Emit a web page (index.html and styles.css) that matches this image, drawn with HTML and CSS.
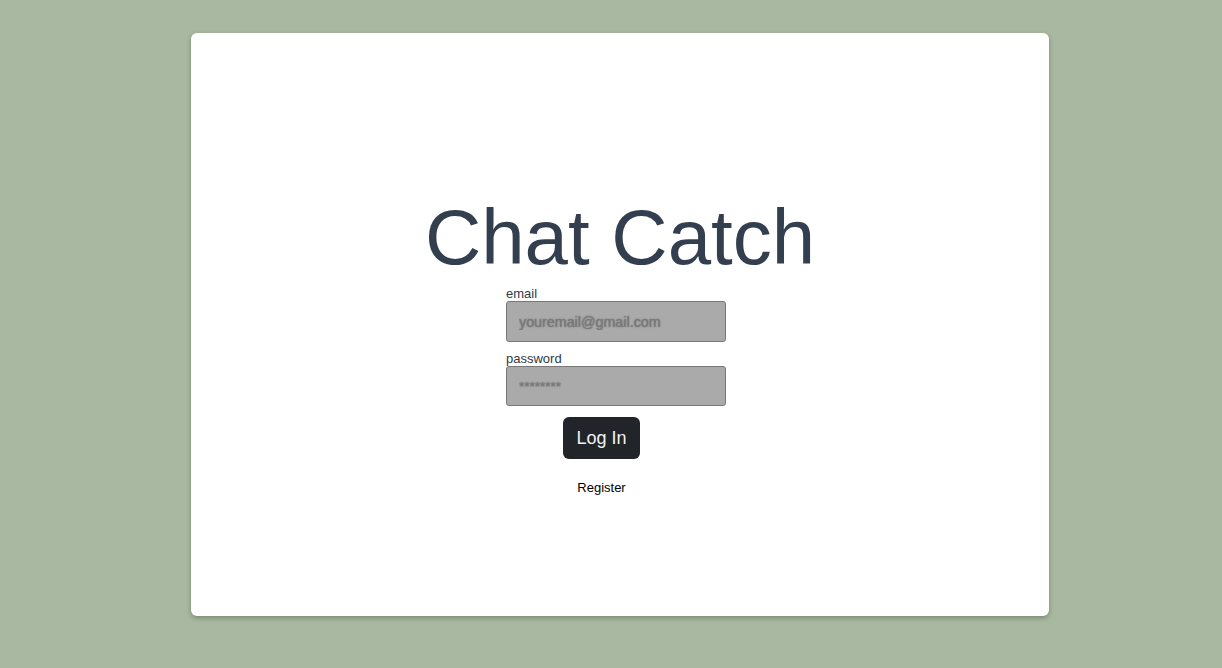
FILE: index.html
```html
<!DOCTYPE html>
<html lang="en">
<head>
<meta charset="utf-8">
<title>Chat Catch</title>
<link rel="stylesheet" href="styles.css">
</head>
<body>
<main class="card">
  <h1 class="title">Chat Catch</h1>
  <form class="login-form">
    <label class="field-label" for="email">email</label>
    <input class="field-input" id="email" type="email" placeholder="youremail@gmail.com">
    <label class="field-label field-label-second" for="password">password</label>
    <input class="field-input field-input-pass" id="password" type="password" placeholder="********">
    <div class="actions">
      <button class="login-btn" type="button">Log In</button>
      <a class="register-link">Register</a>
    </div>
  </form>
</main>
</body>
</html>
```

FILE: styles.css
```css
html, body {
  margin: 0;
  padding: 0;
}
body {
  background: #a9b9a1;
  font-family: "Liberation Sans", Arial, sans-serif;
  width: 1222px;
  height: 668px;
  overflow: hidden;
  padding-top: 33px;
  box-sizing: border-box;
}
.card {
  width: 858px;
  height: 583px;
  margin: 0 0 0 191px;
  background: #ffffff;
  border-radius: 6px;
  box-shadow: 0 2px 5px rgba(60, 80, 55, 0.45);
  box-sizing: border-box;
  padding-top: 165px;
  display: flex;
  flex-direction: column;
  align-items: center;
}
.title {
  margin: 0;
  font-size: 78px;
  line-height: 79px;
  font-weight: 400;
  color: #333f4f;
}
.login-form {
  align-self: flex-start;
  margin-left: 315px;
  margin-top: 9px;
  width: 220px;
  display: flex;
  flex-direction: column;
}
.field-label {
  font-size: 13px;
  line-height: 15px;
  color: #2f3a48;
}
.field-label-second {
  margin-top: 9px;
}
.field-input {
  box-sizing: border-box;
  width: 220px;
  height: 41px;
  margin: 0;
  padding: 0 12px;
  background: #aaaaaa;
  border: 1px solid #787878;
  border-radius: 3px;
  font-family: "Liberation Sans", Arial, sans-serif;
  font-size: 14.3px;
  color: #555;
  outline: none;
}
.field-input::placeholder {
  color: #7a7a7a;
  text-shadow: 0 0 1.5px rgba(90, 90, 90, 0.9);
}
.field-input-pass {
  height: 40px;
}
.field-input-pass::placeholder {
  font-size: 13.5px;
}
.actions {
  width: 191px;
  display: flex;
  flex-direction: column;
  align-items: center;
  margin-top: 11px;
}
.login-btn {
  width: 77px;
  height: 42px;
  background: #212529;
  color: #f2f2f2;
  border: none;
  border-radius: 6px;
  font-family: "Liberation Sans", Arial, sans-serif;
  font-size: 18px;
  padding: 0;
}
.register-link {
  margin-top: 21px;
  font-size: 13px;
  line-height: 15px;
  color: #000;
}
```
